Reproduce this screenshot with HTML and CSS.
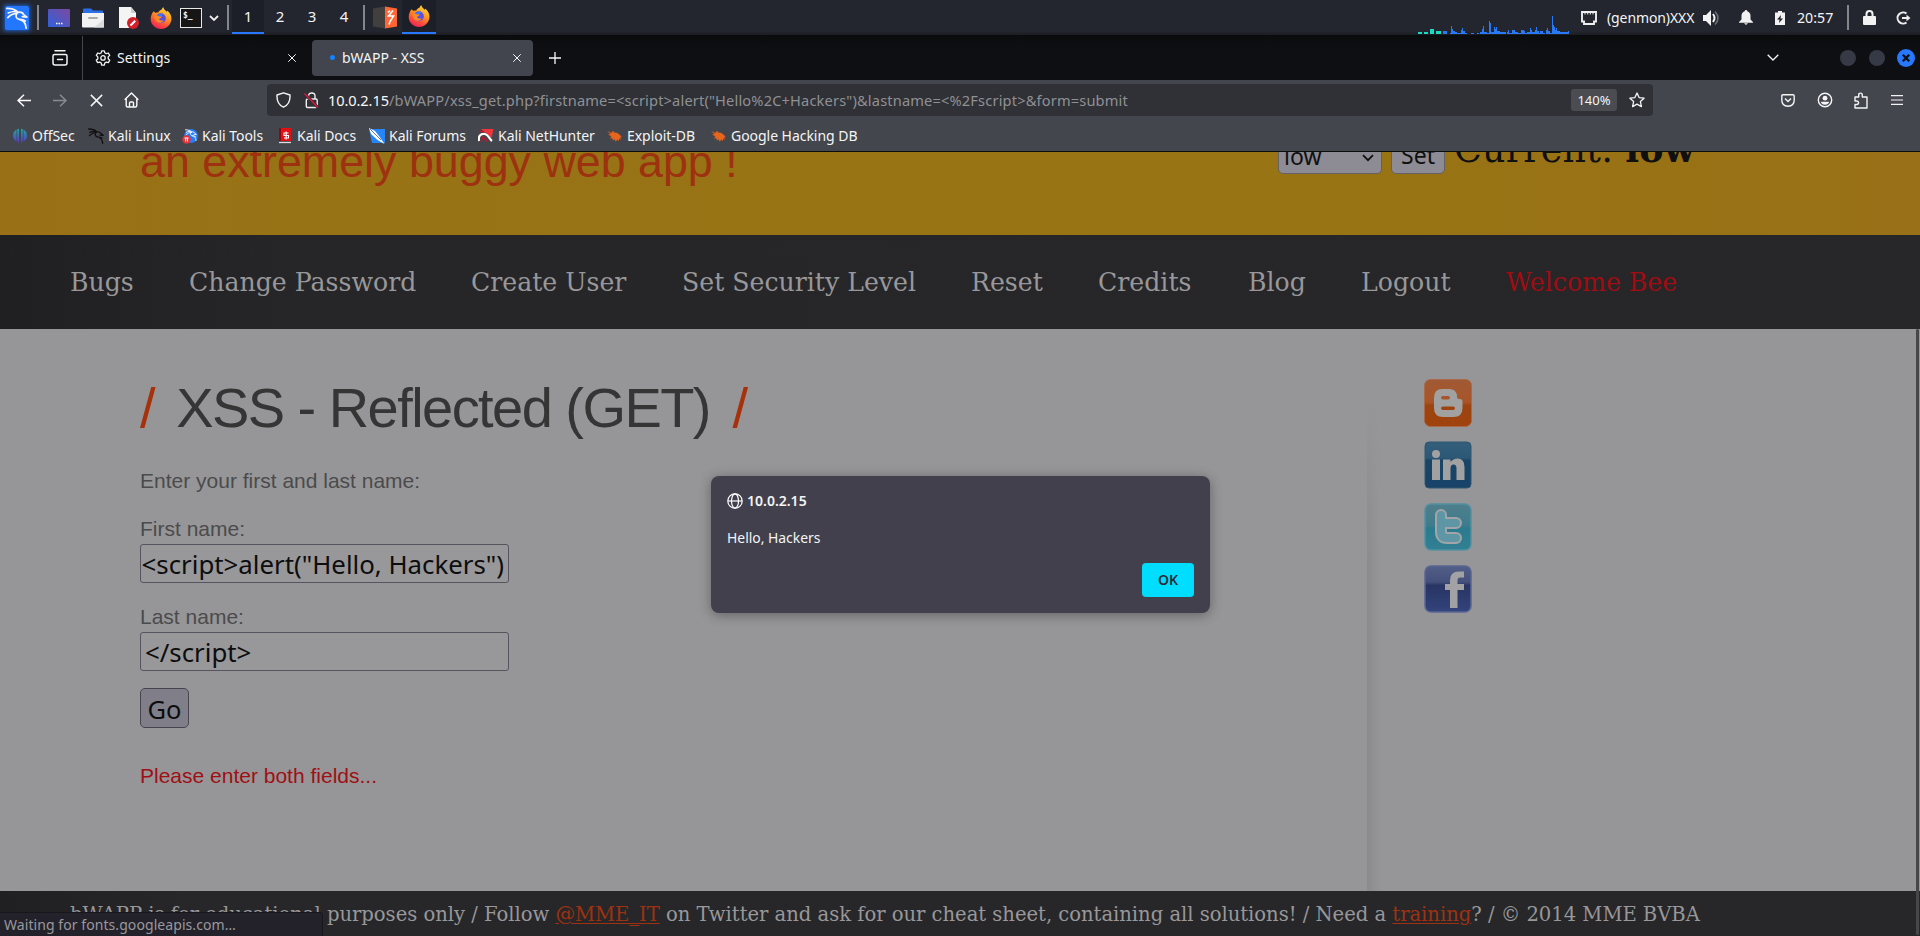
FILE: index.html
```html
<!DOCTYPE html>
<html lang="en">
<head>
<meta charset="utf-8">
<title>bWAPP - XSS</title>
<link rel="stylesheet" href="styles.css">
</head>
<body>
<svg class="defs" width="0" height="0" aria-hidden="true">
  <defs>
    <linearGradient id="flame" x1="0.8" y1="0" x2="0.3" y2="1"><stop offset="0" stop-color="#ffe040"/><stop offset=".4" stop-color="#ff9a20"/><stop offset=".75" stop-color="#ff4a3c"/><stop offset="1" stop-color="#e8205c"/></linearGradient>
    <linearGradient id="desk" x1="0" y1="1" x2="1" y2="0"><stop offset="0" stop-color="#2f62dc"/><stop offset="1" stop-color="#7c489e"/></linearGradient>
    <linearGradient id="teal" x1="0" y1="0" x2="0" y2="1"><stop offset="0" stop-color="#1fa7a5"/><stop offset="1" stop-color="#5a32c8"/></linearGradient>
    <symbol id="firefox" viewBox="0 0 22 22">
      <path fill="url(#flame)" d="M3.600 4.200 5.500 6c.7-.4 1.700-.5 2.600-.3C9 4 10.200 3 11.500 2.800 11.600 2 12.300.6 13.400.2c.2 1.900 2 3 3.500 4.600.3-.2.5-.8.3-1.400 2.600 2 4.400 5.200 4.300 8.400C21.300 17.500 16.600 22 11 22S.7 17.600.7 12C.7 8.800 2 6.100 3.600 4.200z"/>
      <circle cx="10.800" cy="11.300" r="5" fill="#5c4fe0"/><path fill="#3a7af5" d="M7.500 8.500c1.500-2 4-2.600 6-1.300-1.500.5-1.500 2-3 2.600-.8.400-1.800 0-3-1.300z"/>
      <path fill="#ff8a22" d="M4.500 8.800C6 7.700 7.500 8 8.500 9.300c1 .2 2 .2 3.400.3-.2 1.300-2 1.600-2.800 2.300.4 1.600 2.400 2.200 4.500 1.300-1.200 3.200-5.600 3.400-7.500.9-1.300-1.500-1.800-3.300-1.600-5.300z"/>
    </symbol>
    <symbol id="dragon" viewBox="0 0 24 24">
      <path fill="none" stroke="currentColor" stroke-width="1.900" stroke-linecap="round" stroke-linejoin="round" d="M1 1.500c5.500 0 9.500 1.500 12 4M2.500 6.500c4-2 7.500-1.800 10-1M2 11.500c3-3.300 6.500-4.500 10.500-4.800M13 5.800c3-.4 5.500.6 6 2.200l3.800 3-5-.4M12.300 6.500c-2.600 3-1.200 6.300 2.200 7 4 .8 7 2.700 7.500 9.500M15 13.600c2.500 0 4.500.5 6 1.700"/>
    </symbol>
    <symbol id="xmark" viewBox="0 0 12 12"><path d="M1.500 1.500l9 9M10.500 1.500l-9 9" fill="none" stroke="currentColor" stroke-width="1.200"/></symbol>
    <symbol id="bug" viewBox="0 0 15 13"><path fill="#e8641b" d="M0 1.500l4.500 2L6 1l1 1.900c3-.2 5.500 1.200 6.300 3.100L15 7l-1.700.5.7 2.700-1.900-1.300-.2 2.900-1.600-1.900-1.600 2.700-.7-2.700-2.800 1 .9-1.900-3.600-.2 2.100-1.300L1 4.500l2.800.3z"/></symbol>
  </defs>
</svg>

<div class="panel">
  <svg class="p-kali" viewBox="0 0 24 24"><rect width="24" height="24" rx="1.500" fill="#2377ff"/><use href="#dragon" x="1" y="1" width="22" height="22"/></svg>
  <i class="sep sep-a"></i>
  <svg class="p-desk" viewBox="0 0 22 18"><rect width="22" height="18" rx="1" fill="url(#desk)"/><path d="M8 14.500h1.500M10.500 14.500H12M13 14.500h1.500" stroke="#fff" stroke-width="1.300"/></svg>
  <svg class="p-files" viewBox="0 0 22 20"><path d="M1 6V1.500Q1 .5 2 .5h7l2 2h9q1 0 1 1V7H1z" fill="#2a6ee8"/><path d="M0 5h22v13.500q0 1-1 1H1q-1 0-1-1z" fill="#f2f2f2"/><path d="M22 11v8.500H12z" fill="#dcdcdc"/><path d="M7 10h8" stroke="#aaa" stroke-width="2" stroke-linecap="round"/></svg>
  <svg class="p-doc" viewBox="0 0 21 22"><path d="M1 0h12l5 6v15H1z" fill="#f4f4f4"/><path d="M13 0v6h5z" fill="#ccc"/><circle cx="15" cy="16" r="6" fill="#d21f28"/><path d="M12.500 18.500l4.700-4.700" stroke="#fff" stroke-width="2"/></svg>
  <svg class="p-fox"><use href="#firefox"/></svg>
  <div class="p-term">$_</div>
  <svg class="p-chev" viewBox="0 0 10 6"><path d="M1 1l4 4 4-4" fill="none" stroke="#eee" stroke-width="1.800"/></svg>
  <i class="sep sep-b"></i>
  <div class="ws active">1</div><div class="ws">2</div><div class="ws">3</div><div class="ws">4</div>
  <i class="sep sep-c"></i>
  <svg class="p-burp" viewBox="0 0 24 22"><path fill="#42403f" d="M0 2l12-2v22L0 20z"/><path fill="#ff6633" d="M12 0l12 2v18l-12 2z"/><path fill="none" stroke="#fff" stroke-width="1.600" d="M20 4l-4.500 5.500h5L17 15l-1 3M17 4l-2 2"/></svg>
  <div class="task"><svg class="fox"><use href="#firefox"/></svg></div>
  <svg class="graph" viewBox="0 0 148 19" preserveAspectRatio="none" shape-rendering="crispEdges">
    <path fill="#19d9c4" d="M0 16h4v2H0zM6 16h4v2H6zM12 13h4v5h-4zM18 15h4v3h-4z"/>
    <path fill="#2779f5" d="M24 15h4v3h-4zM31 17h1V10h1v3h1v2h2v1h2v1h4v-3h1v-2h1v3h2v2h2v1H31zM46 17h2v1h-2zM52 17h3v1h-3zM57 17h2v1h-2zM60 16h2v-3h1v-3h1v6h3v1h2V5h1v2h1v9h3v-5h1v2h1v-2h1v4h3v1h6v2H60zM87 18v-2h1v-2h1v3h3v-3h2v2h3v1h3v-3h3v1h1v2h2v-1h3v-4h1v2h1v2h3v-2h1v-3h1v4h2v2h1v-2h3v2h2v1zM125 18v-4h1v-2h1v3h2v2h1V0h1v9h1v2h1v3h1v-2h1v3h3v1h8v-1h1v3z"/>
  </svg>
  <svg class="p-net" viewBox="0 0 16 14"><path d="M1 1h14v9.500h-2V13H3v-2.500H1z" fill="none" stroke="#eee" stroke-width="1.900"/><path d="M4 1.500v2M6.700 1.500v2M9.300 1.500v2M12 1.500v2" stroke="#eee"/></svg>
  <span class="genmon">(genmon)XXX</span>
  <svg class="p-vol" viewBox="0 0 17 16"><path d="M0 5h3l5-5v16l-5-5H0z" fill="#f2f2f2"/><path d="M10 4q3 4 0 8" fill="none" stroke="#f2f2f2" stroke-width="2"/><path d="M12 1.500q6 6.500 0 13" fill="none" stroke="#6b6c72" stroke-width="1.600"/></svg>
  <svg class="p-bell" viewBox="0 0 14 15"><path d="M7 0q1.300 0 1.300 1.300Q11.500 2.500 11.500 6v3.500L14 12v.7H0V12l2.500-2.500V6q0-3.500 3.200-4.700Q5.700 0 7 0zM5 13.300h4L7 15z" fill="#f2f2f2"/></svg>
  <svg class="p-bat" viewBox="0 0 10 14"><path d="M3 0h4v1.500h3V14H0V1.500h3z" fill="#f2f2f2"/><path d="M6 4L2 8.500h2.500L4 12l4-4.500H5.500z" fill="#23252e"/></svg>
  <span class="clock">20:57</span>
  <i class="sep sep-d"></i>
  <svg class="p-lock" viewBox="0 0 13 15"><path d="M3.500 7V4q0-3 3-3t3 3v3" fill="none" stroke="#f2f2f2" stroke-width="2"/><rect y="6" width="13" height="9" rx="1" fill="#f2f2f2"/></svg>
  <svg class="p-out" viewBox="0 0 15 14"><path d="M10.500 2.500a5.600 5.600 0 1 0 0 9M6 7h7" fill="none" stroke="#eee" stroke-width="2"/><path d="M10.500 3.700L14.500 7l-4 3.300z" fill="#eee"/></svg>
</div>

<div class="tabs">
  <svg class="t-view" viewBox="0 0 16 16"><path d="M3 .8h10M2.500 4.500h11q1.500 0 1.500 1.500v7q0 2-2 2H3q-2 0-2-2V6q0-1.500 1.500-1.500zM5.500 9.500h5" fill="none" stroke="#f4f4f4" stroke-width="1.500" stroke-linecap="round"/></svg>
  <div class="tab first">
    <svg class="t-gear" viewBox="0 0 16 16"><path d="M6.700.8h2.600l.5 2 1.500.9 2-.7 1.400 2.400-1.500 1.500v1.900l1.500 1.500-1.400 2.400-2-.6-1.500.9-.5 2.200H6.700l-.5-2.200-1.500-.9-2 .6-1.400-2.400 1.500-1.500V6.900L1.300 5.400 2.700 3l2 .7 1.500-.9z" fill="none" stroke="#f4f4f4" stroke-width="1.300" stroke-linejoin="round"/><circle cx="8" cy="7.900" r="2.200" fill="none" stroke="#f4f4f4" stroke-width="1.300"/></svg>
    <span class="t-title">Settings</span>
    <svg class="t-close"><use href="#xmark"/></svg>
  </div>
  <div class="tab current">
    <i class="t-dot"></i>
    <span class="t-title">bWAPP - XSS</span>
    <svg class="t-close"><use href="#xmark"/></svg>
  </div>
  <svg class="t-plus" viewBox="0 0 12 12"><path d="M6 0v12M0 6h12" stroke="#f8f8f8" stroke-width="1.300"/></svg>
  <svg class="t-list" viewBox="0 0 12 7"><path d="M.7.700L6 6 11.300.7" fill="none" stroke="#f4f4f4" stroke-width="1.300"/></svg>
  <i class="win"></i><i class="win"></i>
  <svg class="win-x" viewBox="0 0 18 18"><circle cx="9" cy="9" r="9" fill="#2777ff"/><path d="M5.800 5.800l6.400 6.400M12.200 5.800l-6.400 6.400" stroke="#0e0f12" stroke-width="2.300"/></svg>
</div>

<div class="toolbar">
  <svg class="n-back" viewBox="0 0 14 13"><path d="M14 6.500H1M7 .8L1 6.500l6 5.700" fill="none" stroke="#fafafa" stroke-width="1.500"/></svg>
  <svg class="n-fwd" viewBox="0 0 14 13"><path d="M0 6.500h13M7 .8l6 5.700-6 5.700" fill="none" stroke="#8a8b90" stroke-width="1.500"/></svg>
  <svg class="n-stop"><use href="#xmark"/></svg>
  <svg class="n-home" viewBox="0 0 15 16"><path d="M.7 7.800L7.500 1l6.800 6.800M2.200 6.500v7q0 1.500 1.500 1.500h7.600q1.500 0 1.500-1.500v-7M5.500 15v-4q0-1 1-1h2q1 0 1 1v4" fill="none" stroke="#fafafa" stroke-width="1.400" stroke-linejoin="round"/></svg>
  <div class="urlbar">
    <svg class="u-shield" viewBox="0 0 15 16"><path d="M7.500.8L14 3q.5 9-6.500 12.200Q.5 12 1 3z" fill="none" stroke="#f4f4f4" stroke-width="1.400" stroke-linejoin="round"/></svg>
    <svg class="u-lock" viewBox="0 0 15 17"><path d="M4.500 7V4.300q0-3.300 3.300-3.300T11 4.300V7M3.500 7h8.500q1.200 0 1.200 1.200v6.100q0 1.200-1.200 1.200H3.500q-1.200 0-1.200-1.200V8.200Q2.300 7 3.500 7z" fill="none" stroke="#eee" stroke-width="1.400"/><path d="M.5 1.500l13.500 14" stroke="#303136" stroke-width="3"/><path d="M.5 1.500l13.500 14" stroke="#e0183f" stroke-width="1.400"/></svg>
    <span class="url"><b>10.0.2.15</b>/bWAPP/xss_get.php?firstname=&lt;script&gt;alert("Hello%2C+Hackers")&amp;lastname=&lt;%2Fscript&gt;&amp;form=submit</span>
    <span class="zoom">140%</span>
    <svg class="u-star" viewBox="0 0 16 16"><path d="M8 1l2.100 4.600 5 .6-3.700 3.400 1 5L8 12.100l-4.400 2.500 1-5L.9 6.200l5-.6z" fill="none" stroke="#f4f4f4" stroke-width="1.300" stroke-linejoin="round"/></svg>
  </div>
  <svg class="n-pocket" viewBox="0 0 14 13"><path d="M2 .8h10q1.200 0 1.200 1.200v4q0 6-6.200 6.200Q.8 12 .8 6V2Q.8.800 2 .8z" fill="none" stroke="#f4f4f4" stroke-width="1.400"/><path d="M4 4.500l3 3 3-3" fill="none" stroke="#f4f4f4" stroke-width="1.500"/></svg>
  <svg class="n-user" viewBox="0 0 16 16"><circle cx="8" cy="8" r="6.700" fill="none" stroke="#f4f4f4" stroke-width="1.400"/><circle cx="8" cy="6.200" r="2.400" fill="#f4f4f4"/><path d="M3.800 9.700h8.400q-.8 3-4.200 3t-4.200-3z" fill="#f4f4f4"/></svg>
  <svg class="n-ext" viewBox="0 0 14 17"><path d="M1 5h3.700V3q0-1.900 1.800-1.900T8.300 3v2H13v11H1v-3.500h1.700q1.900 0 1.900-1.700T2.700 9H1z" fill="none" stroke="#f4f4f4" stroke-width="1.400" stroke-linejoin="round"/></svg>
  <svg class="n-menu" viewBox="0 0 12 10"><path d="M0 .7h12M0 5h12M0 9.300h12" stroke="#f4f4f4" stroke-width="1.200"/></svg>
</div>

<div class="bookmarks">
  <div class="bm"><svg viewBox="0 0 16 16"><path fill="url(#teal)" d="M7 .7V15.500L5.200 13V1.200zM9 .7V15.500l1.800-2.500V1.200zM4.500 1.500V13.500Q1 11.500 1 7.500T4.500 1.500zM11.500 1.500V13.500Q15 11.500 15 7.500T11.500 1.500z"/></svg><span>OffSec</span></div>
  <div class="bm dark"><svg viewBox="0 0 16 16"><use href="#dragon" width="16" height="16"/></svg><span>Kali Linux</span></div>
  <div class="bm tools"><svg viewBox="0 0 16 16"><circle cx="9" cy="8" r="7" fill="#267cf2"/><use href="#dragon" x="3" y="1" width="12" height="12"/><circle cx="4.500" cy="11.500" r="4.200" fill="#e8333c"/><path d="M2.500 10h4M3.700 10v3.500M5.500 10v3.500" stroke="#fff"/></svg><span>Kali Tools</span></div>
  <div class="bm docs"><svg viewBox="0 0 16 16"><path fill="#e20f17" d="M2 0h12v13H2z"/><path fill="#8e080e" d="M2 0h2v13H2z"/><path d="M2 14.500h12" stroke="#ddd" stroke-width="1.300"/><path d="M11.500 5L7 5v2.500h4.500V10H7M9.200 3.500v8" fill="none" stroke="#fff" stroke-width="1.100"/></svg><span>Kali Docs</span></div>
  <div class="bm forums"><svg viewBox="0 0 16 16"><path fill="#2685f8" d="M0 1h16v14H3z"/><path fill="#fff" d="M0 0l6 3 4 5 5.500 8-7-4L2 6z"/><path d="M1 1l11 11" stroke="#16447f" stroke-width=".7"/></svg><span>Kali Forums</span></div>
  <div class="bm hunter"><svg viewBox="0 0 16 16"><path fill="#f0343c" d="M3 1h12.500l-2 9z"/><path fill="none" stroke="#fff" stroke-width="2.200" d="M1 13c-1-5 2-8 6-7s4 5 7 7"/><path fill="none" stroke="#c0142c" stroke-width="1.500" d="M3 14l2-5 5 5M1 3l5 1"/></svg><span>Kali NetHunter</span></div>
  <div class="bm edb"><svg viewBox="0 0 16 16"><use href="#bug" y="1.500" width="15" height="13"/></svg><span>Exploit-DB</span></div>
  <div class="bm ghdb"><svg viewBox="0 0 16 16"><use href="#bug" y="1.500" width="15" height="13"/></svg><span>Google Hacking DB</span></div>
</div>

<div class="page">
  <div class="banner">
    <div class="tagline">an extremely buggy web app !</div>
    <div class="level">
      <div class="select"><span>low</span><svg viewBox="0 0 12 8"><path d="M1 1.200l5 5 5-5" fill="none" stroke="#111" stroke-width="1.800"/></svg></div>
      <div class="set">Set</div>
      <div class="cur">Current: <b>low</b></div>
    </div>
  </div>
  <div class="menu">
    <a class="m1">Bugs</a><a class="m2">Change Password</a><a class="m3">Create User</a><a class="m4">Set Security Level</a><a class="m5">Reset</a><a class="m6">Credits</a><a class="m7">Blog</a><a class="m8">Logout</a><a class="red">Welcome Bee</a>
  </div>
  <div class="content">
    <div class="main">
      <h1><i>/</i> <span>XSS - Reflected (GET)</span> <i>/</i></h1>
      <p class="intro">Enter your first and last name:</p>
      <p class="lbl">First name:</p>
      <div class="field over"><span>&lt;script&gt;alert("Hello, Hackers")</span></div>
      <p class="lbl second">Last name:</p>
      <div class="field"><span>&lt;/script&gt;</span></div>
      <div class="go">Go</div>
      <p class="error">Please enter both fields...</p>
    </div>
    <div class="side">
      <svg viewBox="0 0 48 48"><defs><linearGradient id="g1" x2="0" y2="1"><stop offset="0" stop-color="#a05a35"/><stop offset=".48" stop-color="#a85528"/><stop offset=".55" stop-color="#9c4410"/><stop offset="1" stop-color="#a0430e"/></linearGradient></defs><rect x=".5" y=".5" width="47" height="47" rx="6" fill="url(#g1)" stroke="#a86a48"/><path fill="#a2a1a2" fill-rule="evenodd" d="M18 10h7q8 0 8 8 0 2 3 2 2.500 0 2.500 3v6q0 9-9 9H19q-9 0-9-9V19q0-9 8-9zm1 7q-2 0-2 1.700T19 20.400h5q2 0 2-1.700T24 17zm0 10.500q-2 0-2 1.700t2 1.700h10q2 0 2-1.700t-2-1.700z"/></svg>
      <svg viewBox="0 0 48 48"><defs><linearGradient id="g2" x2="0" y2="1"><stop offset="0" stop-color="#345e7c"/><stop offset=".35" stop-color="#2c5876"/><stop offset=".4" stop-color="#184567"/><stop offset="1" stop-color="#194369"/></linearGradient></defs><rect x="1" y="1" width="46" height="46" rx="4" fill="url(#g2)" stroke="#31566f"/><g fill="#a2a1a2"><circle cx="12" cy="13" r="4"/><path d="M8 18.500h8V39H8zM19 18.500h7.500V21q2.500-3.500 7-3.500 7 0 7 8.500v13h-8V27.500q0-4-3-4t-3 4V39H19z"/></g></svg>
      <svg viewBox="0 0 48 48"><defs><linearGradient id="g3" x2="0" y2="1"><stop offset="0" stop-color="#507e8b"/><stop offset=".48" stop-color="#3d7c8e"/><stop offset=".52" stop-color="#2b7a8d"/><stop offset="1" stop-color="#327f93"/></linearGradient></defs><rect x="1" y="1" width="46" height="46" rx="6" fill="url(#g3)" stroke="#5191a1" stroke-width="1.500"/><path fill="none" stroke="#a1a5a7" stroke-width="12" stroke-linecap="round" stroke-linejoin="round" d="M17 12v17q0 6 6 6h9M18 20h14"/><path fill="none" stroke="#5e96a5" stroke-width="8" stroke-linecap="round" stroke-linejoin="round" d="M17 12v17q0 6 6 6h9M18 20h14"/></svg>
      <svg viewBox="0 0 48 48"><defs><linearGradient id="g4" x2="0" y2="1"><stop offset="0" stop-color="#525f88"/><stop offset=".35" stop-color="#444f7b"/><stop offset=".42" stop-color="#283563"/><stop offset="1" stop-color="#33437c"/></linearGradient></defs><rect x="1" y="1" width="46" height="46" rx="6" fill="url(#g4)" stroke="#596692" stroke-width="1.500"/><path fill="#a2a1a4" d="M26 43V25h-5v-6h5v-4q0-8.500 9-8.500h5v6h-4q-2.500 0-2.500 3V19h6.500v6h-6.500v18z"/></svg>
    </div>
  </div>
  <div class="footer">bWAPP is for educational purposes only / Follow <u>@MME_IT</u> on Twitter and ask for our cheat sheet, containing all solutions! / Need a <u>training</u>? / © 2014 MME BVBA</div>
  <div class="scroll"></div>
  <div class="status">Waiting for fonts.googleapis.com…</div>
  <div class="dialog">
    <div class="d-head"><svg viewBox="0 0 16 16"><g fill="none" stroke="#fff" stroke-width="1.200"><circle cx="8" cy="8" r="7.200"/><ellipse cx="8" cy="8" rx="3.500" ry="7.200"/><path d="M1 8h14"/></g></svg><b>10.0.2.15</b></div>
    <div class="d-text">Hello, Hackers</div>
    <div class="d-ok">OK</div>
  </div>
</div>
</body>
</html>
```
FILE: styles.css
```css
* { box-sizing: border-box; }
body { margin: 0; width: 1920px; height: 936px; overflow: hidden; background: #0e0f12; font-family: "Noto Sans", sans-serif; font-size: 14px; color: #f4f4f4; white-space: nowrap; }
svg { display: block; flex: none; }
.defs { position: absolute; }
p, h1 { margin: 0; font-weight: 400; }

.panel { display: flex; align-items: center; height: 35px; padding-left: 5px; background: linear-gradient(#24262f 31px, #1b1d22); }
.panel > * { flex: none; }
.sep { width: 2px; height: 25px; background: #85868b; }
.p-kali { width: 24px; height: 24px; box-shadow: 0 0 4px 1px #1d5fc8; }
.sep-a { margin-left: 8px; }
.p-desk { width: 22px; height: 18px; margin-left: 9px; }
.p-files { width: 22px; height: 20px; margin-left: 12px; }
.p-doc { width: 21px; height: 22px; margin-left: 14px; }
.p-fox { width: 22px; height: 22px; margin: 0 1px 0 11px; }
.p-term { width: 22px; height: 20px; margin-left: 7px; padding: 1px 2px; border: 1px solid #e8e8e8; background: #161616; font: bold 8px/11px "DejaVu Sans Mono", monospace; }
.p-chev { width: 10px; height: 6px; margin-left: 7px; }
.sep-b { margin-left: 8px; }
.sep-b + .ws { margin-left: 3px; }
.ws { width: 32px; height: 34px; margin-bottom: 1px; line-height: 33px; text-align: center; font-size: 15px; }
.ws.active { background: #1c1f27; border-bottom: 2px solid #2777ff; }
.sep-c { margin-left: 3px; }
.p-burp { width: 24px; height: 23px; margin-left: 8px; }
.task { display: flex; align-items: center; justify-content: center; width: 34px; height: 34px; margin: 0 0 1px 5px; background: #1c1f27; border-bottom: 2px solid #2777ff; }
.fox { width: 22px; height: 22px; }
.graph { width: 152px; height: 19px; align-self: flex-end; margin: 0 0 0 982px; }
.p-net { width: 16px; height: 14px; margin-left: 11px; }
.genmon { width: 91px; margin-left: 10px; font-size: 14px; letter-spacing: -.1px; }
.p-vol { width: 17px; height: 16px; margin-left: 5px; }
.p-bell { width: 14px; height: 15px; margin-left: 19px; }
.p-bat { width: 10px; height: 14px; margin-left: 22px; }
.clock { width: 48px; margin-left: 12px; font-size: 14.2px; }
.sep-d { margin-left: 2px; }
.p-lock { width: 13px; height: 15px; margin-left: 14px; }
.p-out { width: 15px; height: 14px; margin-left: 20px; }

.tabs { display: flex; align-items: center; height: 45px; background: linear-gradient(#0a0b0d, #0e0f12 12px); padding-left: 52px; }
.t-view { width: 16px; height: 16px; margin-right: 14px; }
.tab { display: flex; align-items: center; }
.tab.first { width: 230px; height: 44px; border-left: 1px solid #44464d; padding-left: 12px; }
.t-gear { width: 16px; height: 16px; margin-right: 6px; }
.t-title { flex: 1; font-size: 14px; }
.t-close { width: 10px; height: 10px; margin-right: 15px; }
.tab.current { width: 221px; height: 36px; border-radius: 4px; background: #42454d; padding-left: 18px; }
.current .t-close { margin-right: 11px; }
.t-dot { width: 5px; height: 5px; border-radius: 50%; background: #1583ff; margin-right: 7px; }
.t-plus { width: 12px; height: 12px; margin-left: 16px; }
.t-list { width: 12px; height: 7px; margin: 0 61px 0 1206px; }
.win { width: 16px; height: 16px; border-radius: 50%; background: #363a46; margin-right: 13px; }
.win + .win { margin-right: 12px; }
.win-x { width: 18px; height: 18px; }

.toolbar { display: flex; align-items: center; height: 41px; padding: 0 0 1px 17px; background: #43464d; }
.n-back { width: 14px; height: 13px; }
.n-fwd { width: 14px; height: 13px; margin-left: 22px; }
.n-stop { width: 15px; height: 15px; margin-left: 22px; }
.n-home { width: 15px; height: 16px; margin-left: 20px; }
.urlbar { display: flex; align-items: center; width: 1386px; height: 32px; margin-left: 128px; border-radius: 4px; background: #303136; }
.u-shield { width: 15px; height: 16px; margin-left: 9px; }
.u-lock { width: 15px; height: 17px; margin-left: 13px; }
.url { flex: 1; margin-left: 9px; font-size: 14.6px; letter-spacing: .17px; color: #8f9094; }
.url b { font-weight: 400; color: #f8f8f8; letter-spacing: -.1px; }
.zoom { width: 46px; height: 22px; border-radius: 3px; background: #4b4c52; font-size: 13px; line-height: 22px; text-align: center; }
.u-star { width: 16px; height: 16px; margin: 0 8px 0 12px; }
.n-pocket { width: 14px; height: 13px; margin-left: 128px; }
.n-user { width: 16px; height: 16px; margin-left: 22px; }
.n-ext { width: 14px; height: 17px; margin-left: 21px; }
.n-menu { width: 12px; height: 10px; margin-left: 23px; }

.bookmarks { display: flex; height: 31px; padding: 0 0 1px 12px; background: #43464d; border-bottom: 1px solid #0c0c0d; }
.bm { display: flex; align-items: center; gap: 4px; width: 76px; letter-spacing: -.04px; }
.bm svg { width: 16px; height: 16px; }
.bm.dark { width: 94px; }
.dark svg { color: #111; }
.tools { width: 95px; }
.docs { width: 92px; }
.forums { width: 109px; }
.hunter { width: 129px; }
.edb { width: 104px; }

.page { position: relative; height: 784px; overflow: hidden; background: #969698; }
.banner { display: flex; justify-content: space-between; height: 83px; overflow: hidden; padding: 0 224px 0 140px; background: linear-gradient(90deg, #9a7017, #977316 15%, #987414 70%, #997017); }
.tagline { height: 56px; margin-top: -19px; color: #9d3110; font: 44.8px/56px "Liberation Sans", sans-serif; }
.level { display: flex; width: 418px; margin-left: auto; margin-right: 0; }
.select, .set { flex: none; height: 40px; margin-top: -18px; border: 1px solid #636069; border-radius: 5px; background: #8d8b94; color: #101010; font-size: 23px; line-height: 42px; }
.select { display: flex; align-items: center; justify-content: space-between; width: 104px; padding: 3px 7px 0 5px; }
.select svg { width: 12px; height: 8px; margin-top: 5px; }
.set { width: 54px; margin-left: 9px; text-align: center; line-height: 41px; }
.cur { margin: -26px 0 0 9px; color: #101010; font: 36.4px/48px "DejaVu Serif", serif; letter-spacing: .2px; }
.menu { display: flex; height: 94px; padding-left: 70px; background: linear-gradient(90deg, #202022, #262628 15%, #272729); color: #98979a; font: 25.2px/95px "DejaVu Serif", serif; }
.menu a { flex: none; }
.m1 { width: 119px; } .m2 { width: 282px; } .m3 { width: 211px; } .m4 { width: 289px; } .m5 { width: 127px; } .m6 { width: 150px; } .m7 { width: 113px; } .m8 { width: 145px; }
.red { color: #a00c12; }

.content { display: flex; height: 562px; }
.main { width: 1367px; padding: 45px 0 0 140px; color: #4b4b4c; font: 21px/28px "Liberation Sans", sans-serif; }
.main h1 { height: 68px; font-size: 56px; line-height: 68px; color: #353536; }
.main h1 span { margin: 0 7px 0 5px; letter-spacing: -1.55px; }
.main h1 i { color: #a6310a; font-style: normal; }
.intro { margin-top: 25px; }
.lbl { margin-top: 20px; }
.lbl.second { margin-top: 20px; }
.field { display: flex; width: 369px; height: 39px; margin-top: 1px; padding-left: 4px; overflow: hidden; border: 1px solid #56545f; border-radius: 3px; background: #98989a; color: #0d0d0e; font: 25.8px/38px "Noto Sans", sans-serif; }
.over { padding: 0 4px; justify-content: flex-end; }
.go { width: 49px; height: 40px; margin-top: 17px; border: 1px solid #47444f; border-radius: 5px; background: #807e88; color: #0d0d0e; font: 25.5px/41px "Noto Sans", sans-serif; text-align: center; }
.error { margin-top: 34px; color: #a00f14; }
.side { width: 549px; padding: 50px 0 0 57px; background: linear-gradient(#969698, rgba(150, 150, 152, 0)) 0 70px / 14px 160px no-repeat, linear-gradient(90deg, #8b8b8e, rgba(150, 150, 152, 0)) 0 70px / 14px 492px no-repeat; }
.side svg { width: 48px; height: 48px; margin-bottom: 14px; }
.footer { height: 45px; padding-left: 70px; background: linear-gradient(90deg, #202022, #272729 10%); color: #98979a; font: 19.6px/47px "DejaVu Serif", serif; letter-spacing: -.035px; }
.footer u { color: #9d3212; text-underline-offset: 2px; }

.scroll { position: absolute; left: 1916px; top: 177px; width: 3px; height: 606px; border-radius: 2px; background: #47474a; }
.status { position: absolute; left: 0; top: 760px; width: 323px; height: 24px; padding-left: 4px; border: solid #17171b; border-width: 1px 1px 0 0; border-radius: 0 4px 0 0; background: #23222b; color: #99989d; line-height: 24px; font-size: 14px; letter-spacing: .07px; }
.dialog { position: absolute; left: 711px; top: 324px; width: 499px; height: 137px; padding: 16px; border-radius: 8px; background: #42404d; box-shadow: 0 2px 12px rgba(40, 40, 45, .45); }
.d-head { display: flex; align-items: center; gap: 4px; height: 17px; }
.d-head svg { width: 16px; height: 16px; }
.d-head b { font-weight: 600; font-size: 14px; }
.d-text { margin-top: 19px; line-height: 20px; font-size: 13.9px; }
.d-ok { width: 52px; height: 34px; margin: 15px 0 0 auto; border-radius: 4px; background: #00ddff; color: #2b2a33; text-align: center; font-weight: 600; line-height: 33px; }
```
